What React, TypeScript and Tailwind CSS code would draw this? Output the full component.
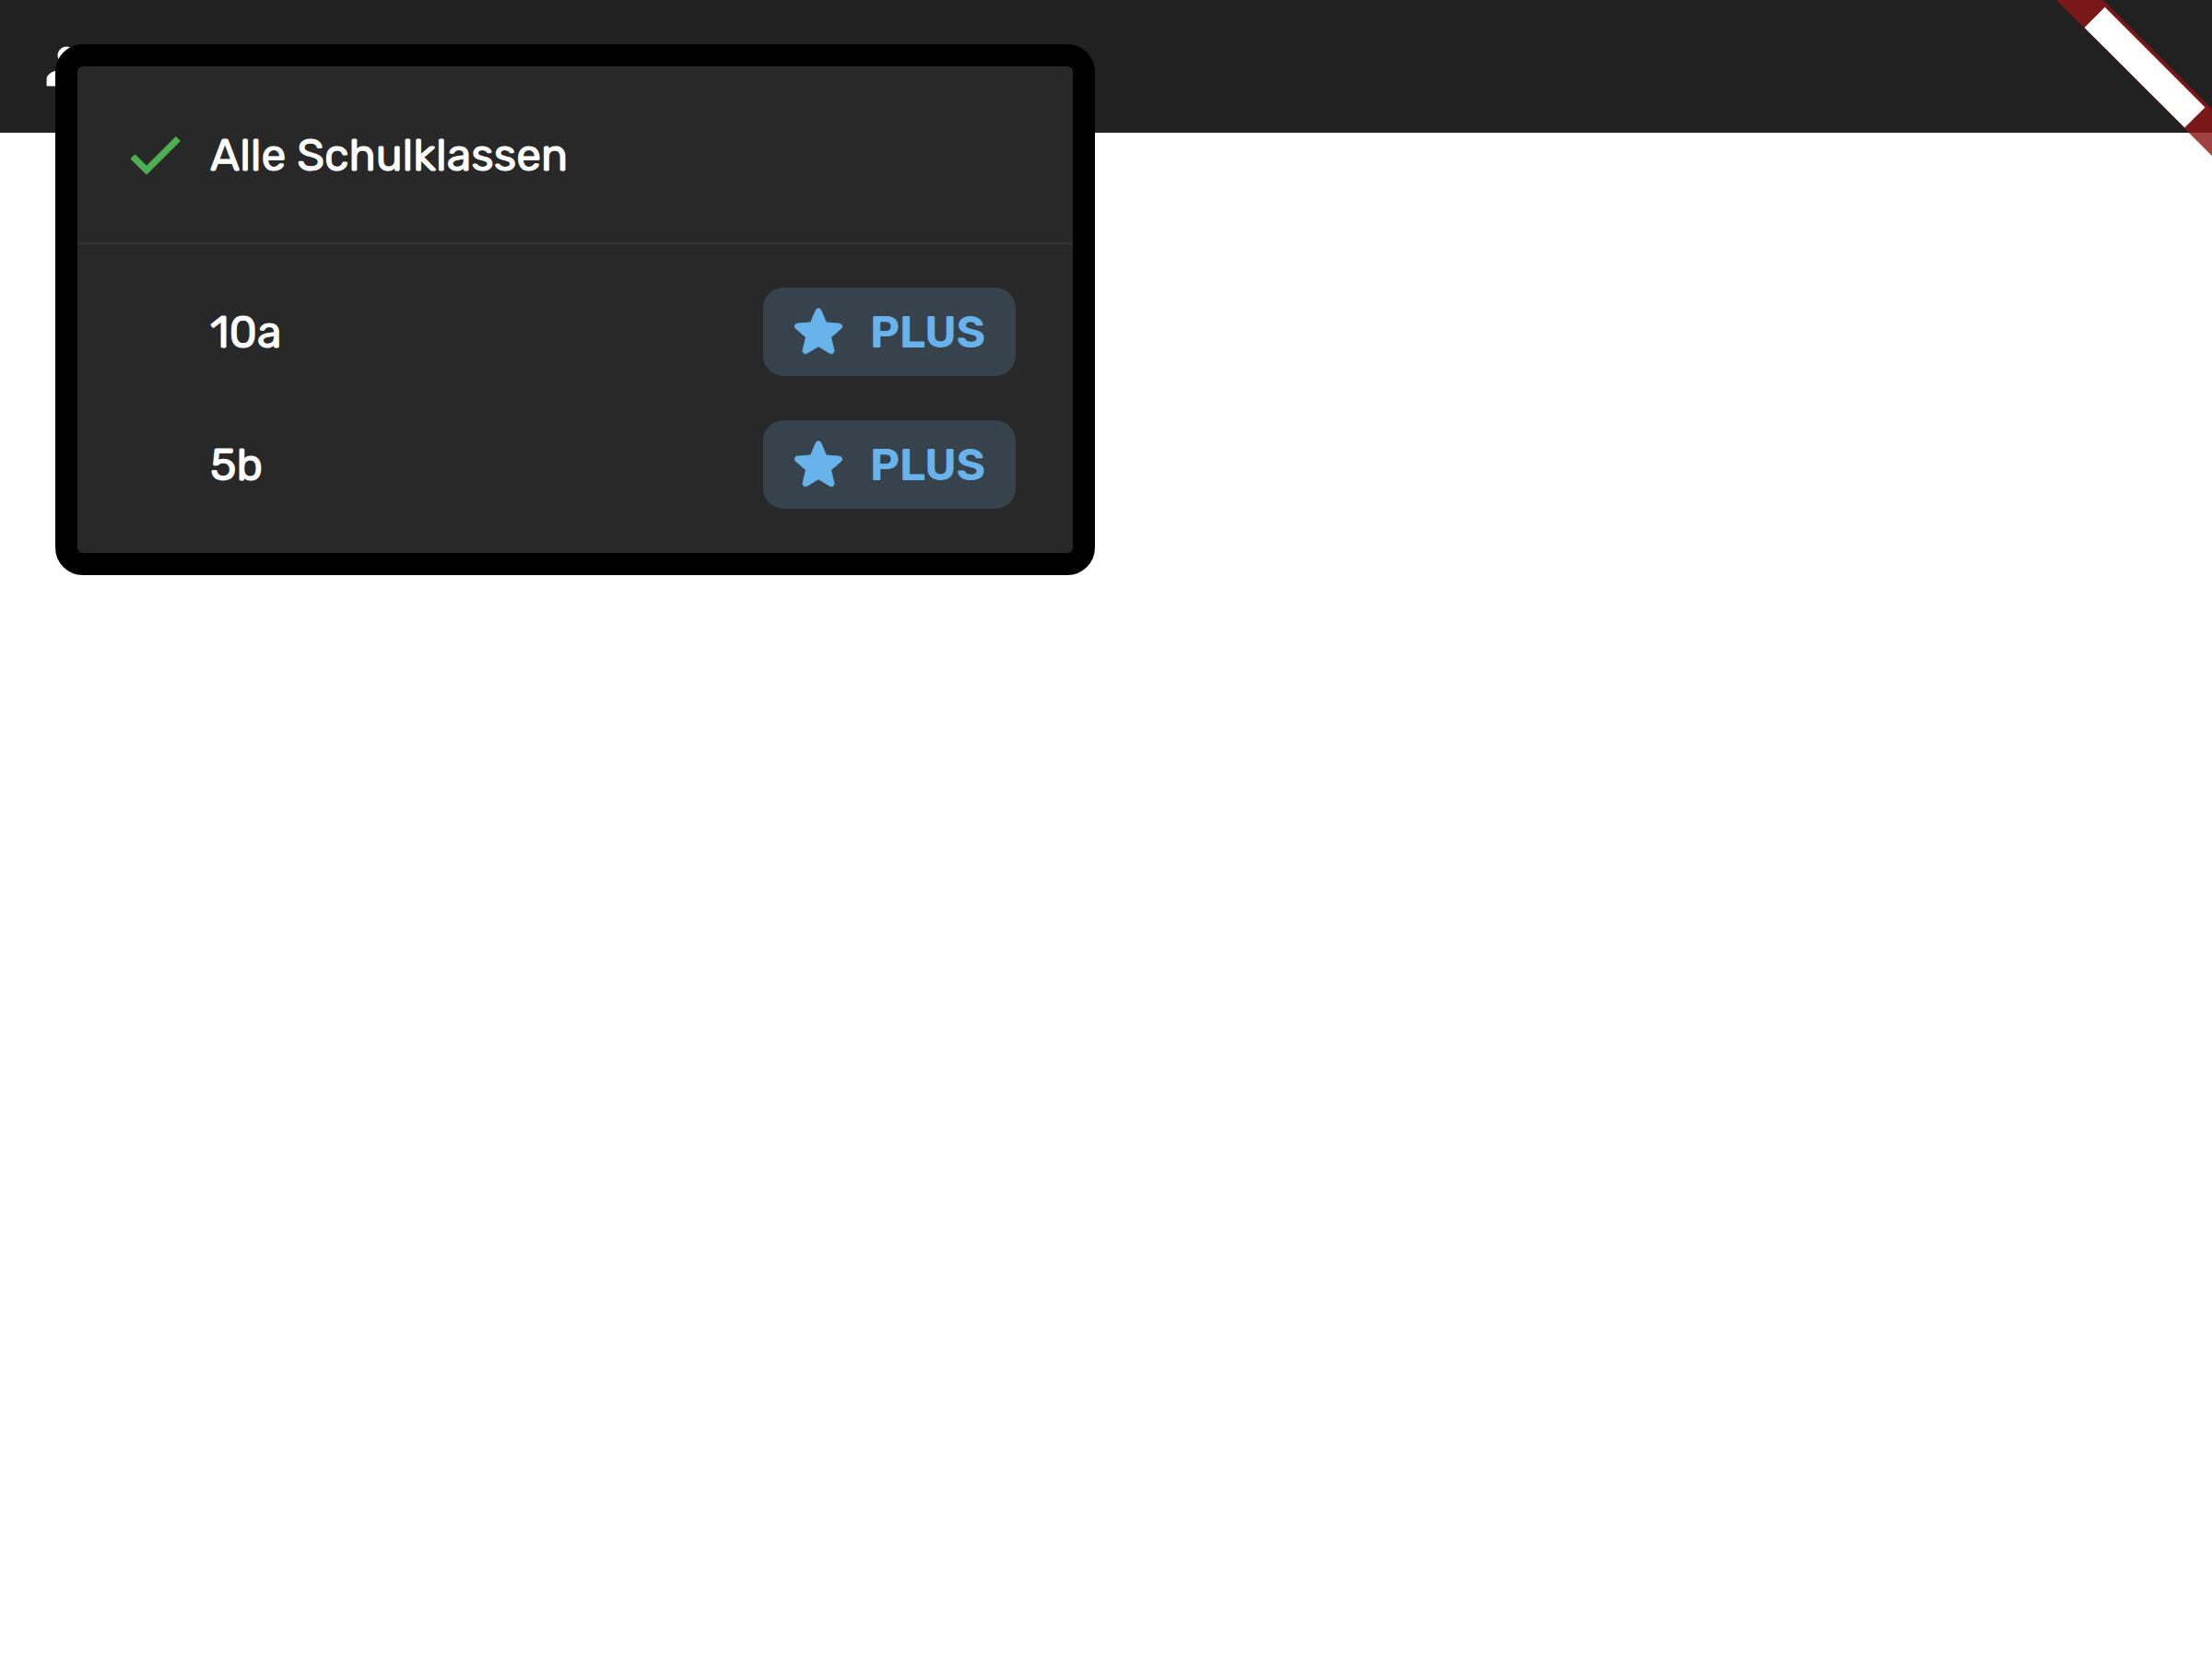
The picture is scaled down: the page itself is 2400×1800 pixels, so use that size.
import React from "react";

const schoolClasses = ["10a", "5b"];

function GroupIcon() {
  return (
    <svg viewBox="0 0 24 24" className="size-[72px] fill-white stroke-white" strokeWidth="0.3" aria-hidden="true">
      <path d="M16 11c1.66 0 2.99-1.34 2.99-3S17.66 5 16 5c-1.66 0-3 1.34-3 3s1.34 3 3 3zm-8 0c1.66 0 2.99-1.34 2.99-3S9.66 5 8 5C6.34 5 5 6.34 5 8s1.34 3 3 3zm0 2c-2.33 0-7 1.17-7 3.5V19h14v-2.5c0-2.33-4.67-3.5-7-3.5z" />
    </svg>
  );
}

function CheckIcon() {
  return (
    <svg viewBox="0 0 24 24" className="size-[72px] shrink-0 fill-[#4caf50] stroke-[#4caf50]" strokeWidth="0.4" aria-hidden="true">
      <path d="M9 16.17L4.83 12l-1.42 1.41L9 19 21 7l-1.41-1.41z" />
    </svg>
  );
}

function StarIcon() {
  return (
    <svg viewBox="0 0 24 24" className="size-[72px] fill-current stroke-current" strokeWidth="0.3" aria-hidden="true">
      <path d="M12 17.27l4.15 2.51c.76.46 1.69-.22 1.49-1.08l-1.1-4.72 3.67-3.18c.67-.58.31-1.68-.57-1.75l-4.83-.41-1.89-4.46c-.34-.81-1.5-.81-1.84 0L9.19 8.63l-4.83.41c-.88.07-1.24 1.17-.57 1.75l3.67 3.18-1.1 4.72c-.2.86.73 1.54 1.49 1.08l4.15-2.5z" />
    </svg>
  );
}

function PlusBadge() {
  return (
    <span className="ml-auto flex h-24 items-center gap-5 rounded-[22px] bg-[#36434d] pr-[33px] pl-6 font-semibold text-[#68b3ec] [-webkit-text-stroke:0px]">
      <StarIcon />
      PLUS
    </span>
  );
}

function CornerBanner() {
  return (
    <svg viewBox="0 0 180 180" className="absolute top-0 right-0 size-[180px]" aria-hidden="true">
      <path d="M10.9 0H61.8L180 118.2V169.1z" fill="#000" fillOpacity="0.5" />
      <path d="M10.9 0H61.8L180 118.2V169.1z" fill="#b71c1c" fillOpacity="0.627" />
      <path d="M63.8 7.7L172.5 116.4 150.3 138.6 41.6 29.9z" fill="#fff" />
    </svg>
  );
}

export default function App() {
  return (
    <div className="relative min-h-screen overflow-hidden bg-white font-['Rubik','Roboto',sans-serif] text-[48px] leading-[57px] text-white [-webkit-text-stroke:1px_currentColor]">
      <header className="flex h-36 items-center bg-[#212121] px-12">
        <button type="button" aria-label="Schulklasse auswählen">
          <GroupIcon />
        </button>
      </header>

      <div
        role="menu"
        className="absolute top-12 left-[60px] w-[1128px] rounded-[30px] border-24 border-black bg-[#282828] py-6"
      >
        <button type="button" role="menuitem" className="flex h-36 w-full items-center gap-6 px-12">
          <CheckIcon />
          Alle Schulklassen
        </button>
        <div role="separator" className="flex h-12 items-center">
          <div className="h-[2px] w-full bg-[#343434]" />
        </div>
        {schoolClasses.map((name) => (
          <button
            key={name}
            type="button"
            role="menuitem"
            className="flex h-36 w-full items-center pr-[62px] pl-36"
          >
            {name}
            <PlusBadge />
          </button>
        ))}
      </div>

      <CornerBanner />
    </div>
  );
}
